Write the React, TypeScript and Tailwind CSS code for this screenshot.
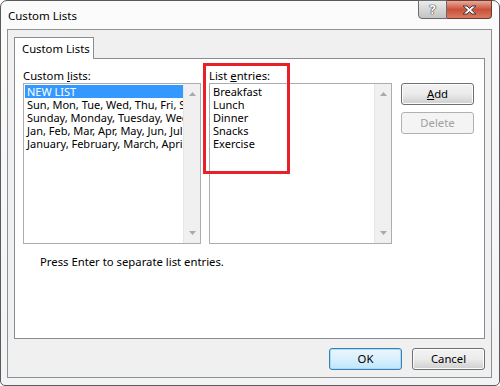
import React from 'react';

const font = { fontFamily: '"Segoe UI", "Noto Sans", Arial, sans-serif' };

function ScrollBar() {
  return (
    <div className="w-[17px] h-full bg-[#f0f0f0] border-l border-[#e6e6e6] flex flex-col justify-between items-center py-[8px]">
      <svg width="7" height="4" viewBox="0 0 7 4">
        <path d="M0 4 L3.5 0 L7 4 Z" fill="#a9a9a9" />
      </svg>
      <svg width="7" height="4" viewBox="0 0 7 4">
        <path d="M0 0 L7 0 L3.5 4 Z" fill="#a9a9a9" />
      </svg>
    </div>
  );
}

function ListBox({ items, selected, width }: { items: string[]; selected?: number; width: string }) {
  return (
    <div className={`${width} h-[161px] border border-[#abadb3] bg-white flex`}>
      <div className="flex-1 min-w-0 overflow-hidden pt-[1px] pl-[1px]">
        {items.map((it, i) => (
          <div
            key={i}
            className={`h-[13px] leading-[13px] pl-[2px] whitespace-nowrap text-[11px] ${
              i === selected ? 'bg-[#3399ff] text-white' : 'text-black'
            }`}
          >
            {it}
          </div>
        ))}
      </div>
      <ScrollBar />
    </div>
  );
}

function Btn({ children, primary, disabled }: { children: React.ReactNode; primary?: boolean; disabled?: boolean }) {
  return (
    <div
      className={`w-[73px] h-[22px] rounded-[3px] border flex items-center justify-center text-[11.3px] ${
        disabled
          ? 'border-[#adb2b5] bg-[#f4f4f4] text-[#a0a0a0]'
          : primary
          ? 'border-[#3c7fb1] bg-gradient-to-b from-[#eaf6fd] via-[#d9f0fc] to-[#bee6fd] text-black shadow-[inset_0_0_0_1px_#a6dcf7]'
          : 'border-[#707070] bg-gradient-to-b from-[#f2f2f2] via-[#ebebeb] to-[#cfcfcf] text-black shadow-[inset_0_0_0_1px_#fcfcfc]'
      }`}
    >
      {children}
    </div>
  );
}

export default function App() {
  const custom = [
    'NEW LIST',
    'Sun, Mon, Tue, Wed, Thu, Fri, Sat',
    'Sunday, Monday, Tuesday, Wednesday',
    'Jan, Feb, Mar, Apr, May, Jun, Jul',
    'January, February, March, April',
  ];
  const entries = ['Breakfast', 'Lunch', 'Dinner', 'Snacks', 'Exercise'];

  return (
    <div style={font} className="w-[500px] h-[386px] bg-white">
      <div className="w-[500px] h-[386px] rounded-t-[7px] rounded-b-[5px] border border-[#5a5a5a] bg-gradient-to-b from-[#fbfbfb] to-[#f1f3f5] flex flex-col">
        {/* title bar */}
        <div className="h-[28px] flex items-start">
          <div className="pl-[7px] pt-[6px] text-[11.5px] text-black whitespace-nowrap">Custom Lists</div>
          <div className="ml-auto mr-[7px] flex h-[19px] -mt-[1px]">
            <div className="w-[29px] h-[19px] rounded-bl-[4px] border border-[#6a6a6a] bg-gradient-to-b from-[#ececec] via-[#d6d6d6] to-[#c4c4c4] flex items-center justify-center">
              <span className="text-[13px] font-bold text-white leading-none [text-shadow:0_0_1px_#333,0_0_1px_#333,0_0_1px_#333]">?</span>
            </div>
            <div className="w-[45px] h-[19px] rounded-br-[4px] border border-l-0 border-[#6a3a30] bg-gradient-to-b from-[#e9a99b] via-[#c9503b] to-[#d87a5f] flex items-center justify-center">
              <svg width="15" height="10" viewBox="0 0 15 10">
                <path
                  d="M1 1 H5 L7.5 3.5 L10 1 H14 L9.5 5 L14 9 H10 L7.5 6.5 L5 9 H1 L5.5 5 Z"
                  fill="#fff"
                  stroke="#3b3b3b"
                  strokeWidth="1"
                  strokeLinejoin="round"
                />
              </svg>
            </div>
          </div>
        </div>

        {/* client area */}
        <div className="ml-[6px] mr-[7px] h-[349px] border border-[#8e8f8f] bg-[#f0f0f0] flex flex-col px-[6px] pt-[7px]">
          {/* tab header */}
          <div className="flex h-[21px]">
            <div className="w-[80px] h-[22px] border border-b-0 border-[#898c95] bg-white text-[11.3px] leading-[15px] text-black pl-[7px] pt-[3px] whitespace-nowrap relative z-10">
              Custom Lists
            </div>
          </div>
          {/* tab panel */}
          <div className="w-[471px] h-[281px] border border-[#898c95] bg-white relative px-[8px] pt-[9px]">
            <div className="flex">
              <div className="flex flex-col">
                <div className="h-[15px] text-[11.3px] leading-[15px] text-black whitespace-nowrap">
                  Custom <span className="underline">l</span>ists:
                </div>
                <ListBox items={custom} selected={0} width="w-[178px]" />
              </div>
              <div className="flex flex-col ml-[8px]">
                <div className="h-[15px] text-[11.3px] leading-[15px] text-black whitespace-nowrap">
                  List <span className="underline">e</span>ntries:
                </div>
                <ListBox items={entries} width="w-[183px]" />
              </div>
              <div className="flex flex-col gap-[7px] ml-[9px] pt-[15px]">
                <Btn>
                  <span className="underline">A</span>dd
                </Btn>
                <Btn disabled>Delete</Btn>
              </div>
            </div>
            <div className="mt-[10px] pl-[17px] text-[11.3px] leading-[15px] text-black whitespace-nowrap">
              Press Enter to separate list entries.
            </div>

            {/* annotation */}
            <div className="absolute left-[188px] top-[4px] w-[87px] h-[111px] border-[3px] border-[#e8202a]" />
          </div>

          {/* bottom buttons */}
          <div className="flex justify-end gap-[10px] mt-[9px] w-[471px]">
            <Btn primary>OK</Btn>
            <Btn>Cancel</Btn>
          </div>
        </div>
      </div>
    </div>
  );
}
